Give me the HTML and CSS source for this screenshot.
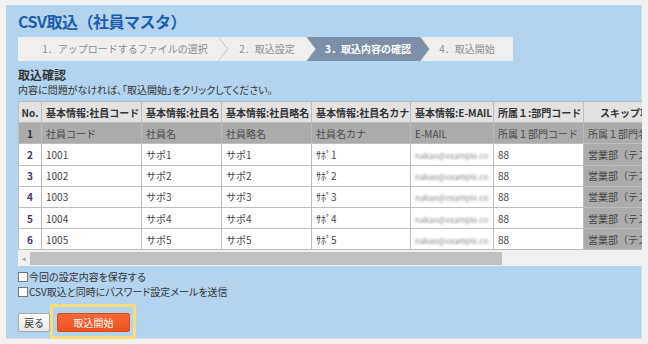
FILE: index.html
```html
<!DOCTYPE html>
<html lang="ja">
<head>
<meta charset="utf-8">
<link rel="stylesheet" href="styles.css">
</head>
<body>
<div class="panel">
  <h1 class="title">CSV取込（社員マスタ）</h1>
  <div class="steps">
    <div class="step s1">1．アップロードするファイルの選択</div>
    <div class="step s2">2．取込設定</div>
    <div class="step s3 active">3．取込内容の確認</div>
    <div class="step s4">4．取込開始</div>
  </div>
  <h2 class="sub">取込確認</h2>
  <p class="desc">内容に問題がなければ、「取込開始」をクリックしてください。</p>
  <div class="tablewrap">
    <table class="grid">
      <colgroup>
        <col class="c1"><col class="c2"><col class="c3"><col class="c4"><col class="c5"><col class="c6"><col class="c7"><col class="c8">
      </colgroup>
      <thead>
        <tr><th class="no">No.</th><th>基本情報:社員コード</th><th>基本情報:社員名</th><th>基本情報:社員略名</th><th>基本情報:社員名カナ</th><th>基本情報:E-MAIL</th><th>所属１:部門コード</th><th class="center">スキップ項目</th></tr>
      </thead>
      <tbody>
        <tr class="first"><td class="no">1</td><td>社員コード</td><td>社員名</td><td>社員略名</td><td>社員名カナ</td><td>E-MAIL</td><td>所属１部門コード</td><td>所属１部門名</td></tr>
        <tr><td class="no">2</td><td>1001</td><td>サポ1</td><td>サポ1</td><td>ｻﾎﾟ1</td><td><span class="blur">nakao@example.com</span></td><td>88</td><td class="skip">営業部（テスト）</td></tr>
        <tr><td class="no">3</td><td>1002</td><td>サポ2</td><td>サポ2</td><td>ｻﾎﾟ2</td><td><span class="blur">nakao@example.com</span></td><td>88</td><td class="skip">営業部（テスト）</td></tr>
        <tr><td class="no">4</td><td>1003</td><td>サポ3</td><td>サポ3</td><td>ｻﾎﾟ3</td><td><span class="blur">nakao@example.com</span></td><td>88</td><td class="skip">営業部（テスト）</td></tr>
        <tr><td class="no">5</td><td>1004</td><td>サポ4</td><td>サポ4</td><td>ｻﾎﾟ4</td><td><span class="blur">nakao@example.com</span></td><td>88</td><td class="skip">営業部（テスト）</td></tr>
        <tr><td class="no">6</td><td>1005</td><td>サポ5</td><td>サポ5</td><td>ｻﾎﾟ5</td><td><span class="blur">nakao@example.com</span></td><td>88</td><td class="skip">営業部（テスト）</td></tr>
      </tbody>
    </table>
  </div>
  <div class="hscroll"><span class="arrow">◂</span><span class="thumb"></span></div>
  <label class="check"><span class="box"></span>今回の設定内容を保存する</label>
  <label class="check"><span class="box"></span>CSV取込と同時にパスワード設定メールを送信</label>
  <div class="actions">
    <button class="btn back">戻る</button>
    <span class="highlight"><button class="btn go">取込開始</button></span>
  </div>
</div>
</body>
</html>
```

FILE: styles.css
```css
html, body {
  margin: 0;
  padding: 0;
}
body {
  background: #f2f2f2;
  width: 648px;
  height: 344px;
  overflow: hidden;
  font-family: "Noto Sans CJK JP", "Noto Sans", sans-serif;
  color: #333;
}
.panel {
  margin: 5px 0 0 6px;
  width: 636px;
  height: 334px;
  padding: 6px 0 0 12px;
  box-sizing: border-box;
  background: #b3d4ef;
  border-right: 1px solid #dcdcdc;
  border-bottom: 1px solid #dcdcdc;
}
.title {
  margin: 0;
  font-size: 16px;
  line-height: 20px;
  font-weight: bold;
  color: #1d5eaa;
  letter-spacing: -0.5px;
}
.steps {
  margin-top: 6px;
  display: flex;
  width: 495px;
  height: 24px;
  background: #c3c3c3;
}
.step {
  height: 24px;
  line-height: 24px;
  font-size: 10px;
  color: #8c8c8c;
  background: #efefef;
  text-align: center;
  padding: 0 9px;
  box-sizing: border-box;
  white-space: nowrap;
  margin-left: -8px;
  clip-path: polygon(0 0, calc(100% - 9px) 0, 100% 50%, calc(100% - 9px) 100%, 0 100%, 9px 50%);
}
.s1 {
  width: 209px;
  margin-left: 0;
  padding-left: 14px;
  clip-path: polygon(0 0, calc(100% - 9px) 0, 100% 50%, calc(100% - 9px) 100%, 0 100%);
}
.s2 { width: 96px; }
.s3 { width: 122px; }
.s4 {
  width: 92px;
  clip-path: polygon(0 0, 100% 0, 100% 100%, 0 100%, 9px 50%);
}
.step.active {
  background: #7e90a7;
  color: #fff;
  font-weight: bold;
}
.sub {
  margin: 7px 0 0;
  font-size: 12px;
  line-height: 14px;
  font-weight: bold;
  color: #333;
}
.desc {
  margin: 1px 0 0;
  font-size: 10px;
  line-height: 14px;
  color: #333;
  font-feature-settings: "palt";
}
.tablewrap {
  margin-top: 4px;
  width: 624px;
  overflow: hidden;
}
.grid {
  border-collapse: collapse;
  table-layout: fixed;
  width: 655px;
  font-size: 10px;
  color: #444;
}
.c1 { width: 23px; }
.c2 { width: 100px; }
.c3 { width: 80px; }
.c4 { width: 90px; }
.c5 { width: 99px; }
.c6 { width: 83px; }
.c7 { width: 90px; }
.c8 { width: 90px; }
.grid th, .grid td {
  border: 1px solid #bdbdbd;
  padding: 0 1px 0 4px;
  height: 20.2px;
  text-align: left;
  white-space: nowrap;
  overflow: hidden;
}
.grid th {
  background: #e2e2e2;
  font-weight: bold;
  color: #333;
}
.grid th.center { text-align: center; }
.grid td { background: #fff; }
.grid tr.first td {
  background: #ababab;
  color: #4a4a4a;
}
.grid td.skip { background: #ababab; color: #444; }
.grid .no {
  text-align: center;
  padding: 0;
  font-weight: bold;
  color: #45306b;
}
.grid th.no { color: #333; }
.grid tr.first td.no { color: #333; }
.blur {
  display: inline-block;
  vertical-align: middle;
  max-width: 74px;
  overflow: hidden;
  color: #8a8a8a;
  filter: blur(0.9px);
  font-size: 8px;
  line-height: 12px;
}
.hscroll {
  width: 624px;
  height: 16px;
  background: #f0f0f0;
  display: flex;
  align-items: center;
}
.arrow {
  width: 12px;
  font-size: 7px;
  color: #a0a0a0;
  text-align: center;
}
.thumb {
  width: 472px;
  height: 13px;
  background: #c1c1c1;
}
.check {
  display: flex;
  align-items: center;
  font-size: 10px;
  line-height: 15px;
  color: #333;
  font-feature-settings: "palt";
}
.check:first-of-type { margin-top: 3px; }
.box {
  width: 8px;
  height: 8px;
  border: 1px solid #777;
  background: #fff;
  margin-right: 1px;
}
.actions {
  margin-top: 5px;
  display: flex;
  align-items: flex-start;
}
.btn {
  font-family: "Noto Sans CJK JP", sans-serif;
  font-size: 10px;
  padding: 0;
  cursor: pointer;
}
.back {
  margin-top: 9px;
  width: 32px;
  height: 19px;
  border: 1px solid #a9a9a9;
  border-radius: 2px;
  background: linear-gradient(#ffffff, #e6e6e6);
  color: #333;
}
.highlight {
  display: block;
  border: 3px solid #f9dc7c;
  padding: 6px 3px 4px 4px;
}
.go {
  display: block;
  width: 73px;
  height: 19px;
  border: 1px solid #d9491a;
  border-radius: 2px;
  background: linear-gradient(#f7693a, #ee5020);
  color: #fff;
}
```
